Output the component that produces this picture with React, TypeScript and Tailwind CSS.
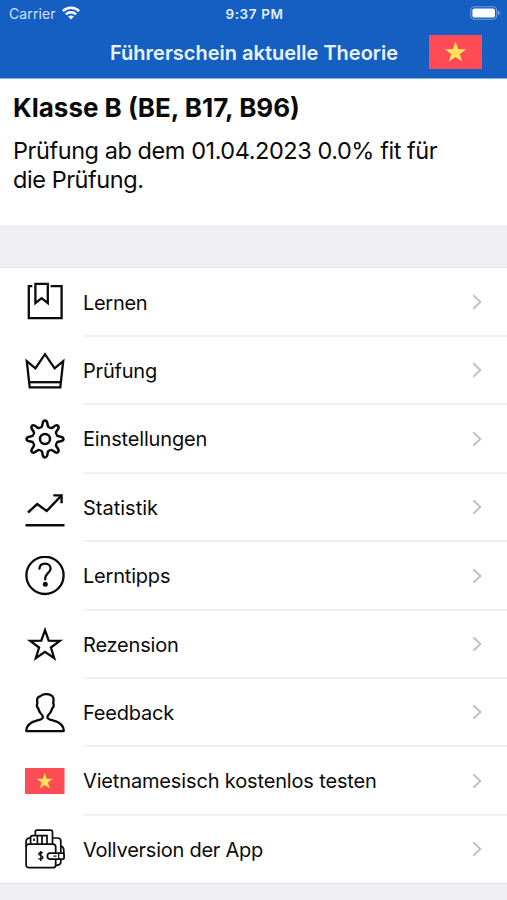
import type { ReactNode } from "react";

const STAR = "M0 -10 L2.35 -3.24 9.51 -3.09 3.8 1.24 5.88 8.09 0 4 -5.88 8.09 -3.8 1.24 -9.51 -3.09 -2.35 -3.24Z";

function Flag({ className }: { className: string }) {
  return (
    <svg viewBox="0 0 52 34" className={className} preserveAspectRatio="none">
      <rect width="52" height="34" fill="#ff4b55" />
      <path d={STAR} transform="translate(26 17.6) scale(1.12)" fill="#ffe15a" />
    </svg>
  );
}

function Icon({ children, width = 2.3 }: { children: ReactNode; width?: number }) {
  return (
    <svg viewBox="0 0 40 40" className="size-10" fill="none" stroke="#0a0a0a" strokeWidth={width}>
      {children}
    </svg>
  );
}

const BookIcon = () => (
  <Icon>
    <path d="M7.3 4.2H3.8V36.2H36.6V4.2H25.6" />
    <path d="M10.4 1.8H22.8V21.2L16.6 16.2 10.4 21.2Z" />
  </Icon>
);

const CrownIcon = () => (
  <Icon>
    <path d="M1.8 10.2L10.4 17.3 20 3.2 29.6 17.3 38.2 10.2 35.3 36.4H4.7Z" />
    <path d="M4 31.2H36" />
  </Icon>
);

const TOOTH_ANGLES = [0, 45, 90, 135, 180, 225, 270, 315];

const GearIcon = () => (
  <Icon width={2.5}>
    {TOOTH_ANGLES.map((angle) => (
      <path
        key={angle}
        transform={`translate(20 20) rotate(${angle})`}
        d="M-4.96 -11.97C-3.4 -11.4 -2.8 -12.5 -2.6 -14.5C-2.3 -17 -2 -18.5 0 -18.5C2 -18.5 2.3 -17 2.6 -14.5C2.8 -12.5 3.4 -11.4 4.96 -11.97"
      />
    ))}
    <circle cx="20" cy="20" r="5" />
  </Icon>
);

const ChartIcon = () => (
  <Icon width={2.4}>
    <path d="M3 25.5L12.2 17 21.7 24 36.3 8.7" />
    <path d="M28.3 8.4H36.6V16.3" />
    <path d="M.5 38.2H39.5" />
  </Icon>
);

const QuestionIcon = () => (
  <Icon>
    <circle cx="20" cy="19.4" r="18.6" />
    <path d="M14.4 12.7C14.7 9.4 17 7.7 20.1 7.7C23.4 7.7 25.6 9.6 25.6 12.4C25.6 14.7 24.4 15.8 22.7 17.3C20.8 19 20.2 20.1 20.2 23.4" strokeLinecap="round" />
    <circle cx="20.3" cy="28.2" r="2.5" fill="#0a0a0a" stroke="none" />
  </Icon>
);

const StarIcon = () => (
  <Icon width={2.3}>
    <path d="M20 6.1L23.7 16.6 34.8 16.8 25.9 23.5 29.2 34.2 20 27.8 10.8 34.2 14.1 23.5 5.2 16.8 16.3 16.6Z" />
  </Icon>
);

const PersonIcon = () => (
  <Icon>
    <path
      strokeLinejoin="round"
      d="M1.2 38.1C1.2 32.6 6.4 28.9 12.4 27.4Q17.9 26.1 17.9 24.2Q17.9 22.4 15.4 20C13.9 18.2 13.7 16.6 13.1 15.2C11.6 13.8 11.6 12 12.4 10.2C11.5 5.2 12.6 4 15.6 3.1C17.4 .8 23 .5 26.4 2.5C28.8 3.4 28.9 6.4 28.2 10.2C29.1 11.8 28.8 13.8 27.3 15.2C26.7 16.8 26.4 18.2 25 20Q22.4 22.5 22.4 24.2Q22.4 26.2 27.8 27.4C33.8 28.9 38.8 32.6 38.8 38.1Z"
    />
  </Icon>
);

const WalletIcon = () => (
  <Icon width={1.7}>
    <rect x="1.1" y="15.1" width="29.6" height="23.6" rx="2.8" />
    <path d="M1.1 18V12.5Q1.1 9.4 5 8.8" />
    <path d="M5.6 15V8.5Q5.6 6.6 7.5 6.6H22V15M12.4 6.6V15M17 6.6V15M9 9.5V12" />
    <path d="M10.3 6.4V3Q10.3 1.2 12 1.2H25.5Q27.5 1.2 27.5 3V15" />
    <path d="M27.5 9H32.6Q35.8 9 35.8 12V23.5M35.8 30.3V33Q35.8 36.3 31 36.3" />
    <path d="M35.8 17Q38.8 18 38.8 21V24M38.8 30V21" />
    <path d="M25 24.1H37.5Q39 24.1 39 25.5V28.8Q39 30.2 37.5 30.2H25Q22.4 30.2 22.4 27.1Q22.4 24.1 25 24.1Z" fill="white" />
    <path d="M33.7 24.2V30.2M28.5 27.2H31.5" strokeWidth="1.2" />
    <path d="M17.7 24.1C17 23.3 13.8 23.1 13.8 25C13.8 27 17.9 26.3 17.9 28.5C17.9 30.5 14.4 30.5 13.5 29.3M15.8 21.9V32" strokeWidth="1.4" />
  </Icon>
);

const ITEMS: { label: string; icon: ReactNode; tracking: string }[] = [
  { label: "Lernen", icon: <BookIcon />, tracking: "tracking-[-0.3px]" },
  { label: "Prüfung", icon: <CrownIcon />, tracking: "tracking-[-0.2px]" },
  { label: "Einstellungen", icon: <GearIcon />, tracking: "tracking-[-0.17px]" },
  { label: "Statistik", icon: <ChartIcon />, tracking: "tracking-[0px]" },
  { label: "Lerntipps", icon: <QuestionIcon />, tracking: "tracking-[-0.2px]" },
  { label: "Rezension", icon: <StarIcon />, tracking: "tracking-[-0.2px]" },
  { label: "Feedback", icon: <PersonIcon />, tracking: "tracking-[-0.2px]" },
  { label: "Vietnamesisch kostenlos testen", icon: <Flag className="h-[26px] w-[39.5px]" />, tracking: "tracking-[-0.15px]" },
  { label: "Vollversion der App", icon: <WalletIcon />, tracking: "tracking-[-0.25px]" },
];

export default function App() {
  return (
    <div className="flex h-[900px] w-[507px] flex-col overflow-hidden bg-[#efeff4] font-['Inter','Liberation_Sans',sans-serif] text-[#0a0a0a]">
      <header className="h-[79px] shrink-0 border-b border-[#7fb0ea] bg-[#155fc2] text-white">
        <div className="grid h-[27px] grid-cols-3 items-center pr-[7px] pl-[9px]">
          <div className="flex items-center gap-[6px] text-[14px] tracking-[0.1px] text-[#cfe2fb]">
            Carrier
            <svg viewBox="0 0 18 14" className="-mt-[2px] h-[14px] w-[18px]" fill="none" stroke="white" strokeWidth="2.5">
              <path d="M.9 5.1C5.4 .6 12.6 .6 17.1 5.1" />
              <path d="M3.9 8.3C6.8 5.5 11.2 5.5 14.1 8.3" />
              <path d="M9 13.5L6.1 10.6C7.7 9 10.3 9 11.9 10.6Z" fill="white" stroke="none" />
            </svg>
          </div>
          <div className="pt-px text-center text-[13.5px] font-semibold tracking-[0.6px] text-[#e4f0ff]">9:37 PM</div>
          <svg viewBox="0 0 30 14" className="-mt-px h-[14px] w-[30px] justify-self-end">
            <rect x=".7" y=".7" width="26" height="12.6" rx="3.8" fill="none" stroke="#719fdc" strokeWidth="1.1" />
            <rect x="2.4" y="2.4" width="22.6" height="9.2" rx="2.2" fill="white" />
            <path d="M28 4.7Q30 5.4 30 7T28 9.3Z" fill="#719fdc" />
          </svg>
        </div>
        <div className="flex h-[50px] items-center justify-end pr-[25px]">
          <h1 className="mr-[31px] w-[288px] pt-px text-[20px] font-semibold whitespace-nowrap text-[#e9f3ff]">Führerschein aktuelle Theorie</h1>
          <Flag className="h-[34px] w-[53px]" />
        </div>
      </header>
      <section className="h-[146px] shrink-0 bg-white px-[13px] pt-[13px]">
        <h2 className="text-[26px] leading-[32px] font-bold">Klasse B (BE, B17, B96)</h2>
        <p className="mt-[12px] text-[23.5px] leading-[29px] tracking-[-0.44px]">
          Prüfung ab dem 01.04.2023 0.0% fit für
          <br />
          die Prüfung.
        </p>
      </section>
      <ul className="mt-[42px] h-[617px] shrink-0 border-y border-[#e2e2e5] bg-white pt-[0.6px]">
        {ITEMS.map(({ label, icon, tracking }) => (
          <li key={label} className="group flex h-[68.4px] items-center pl-[25px]">
            <div className="mb-px flex size-10 shrink-0 items-center">{icon}</div>
            <div className="ml-[18px] flex h-full flex-1 items-center justify-between border-b-2 border-[#f1f1f2] pt-[1.6px] pr-[25px] group-last:border-transparent">
              <span className={`text-[20px] whitespace-nowrap ${tracking}`}>{label}</span>
              <svg viewBox="0 0 10 16" className="mb-px h-4 w-[10px]" fill="none" stroke="#c2c2c5" strokeWidth="2">
                <path d="M1.3 1.3L8.3 8 1.3 14.7" />
              </svg>
            </div>
          </li>
        ))}
      </ul>
    </div>
  );
}
